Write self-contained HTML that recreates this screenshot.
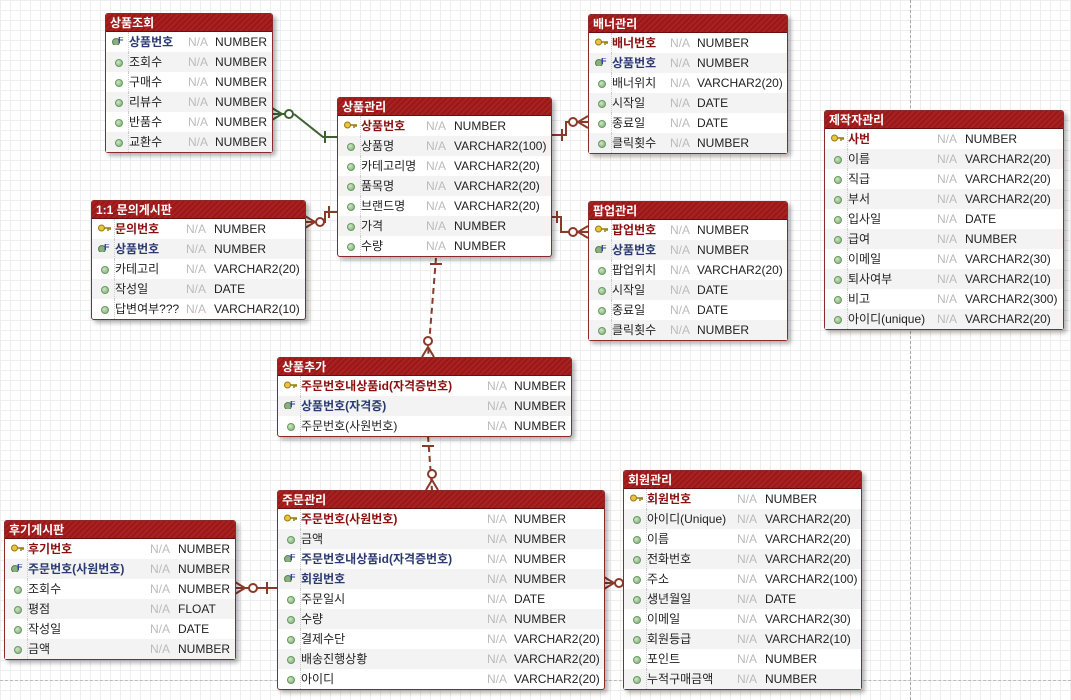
<!DOCTYPE html>
<html><head><meta charset="utf-8"><style>
*{margin:0;padding:0;box-sizing:border-box}
body{width:1071px;height:700px;overflow:hidden;position:relative;background-color:#fff;
background-image:linear-gradient(#eeeeee 1px,transparent 1px),linear-gradient(90deg,#eeeeee 1px,transparent 1px);background-size:10px 10px;
font-family:"Liberation Sans","Noto Sans CJK KR","NanumGothic",sans-serif;font-size:12px;color:#222}
.vd{position:absolute;left:910px;top:0;height:700px;border-left:1px dashed #aaa}
.hd{position:absolute;left:0;top:680px;width:1071px;border-top:1px dashed #bbb}
.t{position:absolute;border:1px solid #8a2a2a;border-radius:3px;background:#fff;box-shadow:3px 3px 4px rgba(0,0,0,.3)}
.h{height:18px;background:repeating-linear-gradient(135deg,#9a1818 0 2px,#a82222 2px 4px);color:#fff;font-weight:bold;font-size:12px;line-height:18px;padding-left:4px;border-bottom:1px solid #6a0f0f;border-radius:2px 2px 0 0}
.r{position:relative;height:20px;line-height:20px;white-space:nowrap}
.r:nth-child(odd){background:#f3f3f3}
.r span{position:absolute;top:0}
.n{left:var(--a)}.na{left:var(--b);color:#bbb}.ty{left:var(--c)}
.i{left:9px;top:7px!important;width:8px;height:8px;border-radius:50%;background:radial-gradient(circle at 35% 35%,#cfe6c8,#7aa870);border:1px solid #6a9a60}
.pk .n{color:#8a1010;font-weight:bold}
.fk .n{color:#2a3a70;font-weight:bold}
.k{left:6px;top:5px!important;width:14px;height:8px}
.pk .i,.fk .i{display:none}
.r::after{content:"";position:absolute;left:22px;top:0;height:20px;border-left:1px dotted #ccc}
</style></head><body>
<div class="vd"></div><div class="hd"></div>
<svg width="1071" height="700" style="position:absolute;left:0;top:0" fill="none" stroke-width="2">
<g stroke="#3d6230">
<path d="M272 114H288M294 114L323 137H337M325 131V143M272 108L282 114L272 120"/><circle cx="289" cy="114" r="4" fill="#fff"/></g>
<g stroke="#8a3a2a">
<path d="M551 135H566V122H588M588 116L578 122L588 128M562 129V141"/><circle cx="573" cy="122" r="4" fill="#fff"/>
<path d="M551 217H561V232H588M588 226L578 232L588 238M557 211V223"/><circle cx="573" cy="232" r="4" fill="#fff"/>
<path d="M337 212H325V222H305M305 216L315 222L305 228M329 206V218"/><circle cx="320" cy="222" r="4" fill="#fff"/>
<path d="M436 258L428 357" stroke-dasharray="6 4"/><path d="M430 264H442M422 357L428 347L434 357"/><circle cx="428" cy="341" r="4" fill="#fff"/>
<path d="M428 436L432 490" stroke-dasharray="6 4"/><path d="M422 446H434M426 490L432 480L438 490"/><circle cx="432" cy="474" r="4" fill="#fff"/>
<path d="M235 588H277M235 582L245 588L235 594M267 582V594"/><circle cx="253" cy="588" r="4" fill="#fff"/>
<path d="M604 583H623M604 577L614 583L604 589"/><circle cx="619" cy="583" r="4" fill="#fff"/>
</g></svg>

<svg width="0" height="0" style="position:absolute"><defs>
<g id="key"><circle cx="3.5" cy="4" r="3" fill="#e8c440" stroke="#9a7a10"/><path d="M6 4H13M10 4V7M12 4V6" stroke="#9a7a10" stroke-width="1.5"/></g>
<g id="fk"><circle cx="4" cy="5" r="3.5" fill="#8ab080" stroke="#5a8050"/><text x="6" y="6" font-size="9" font-weight="bold" fill="#2a3aa0" font-family="Liberation Sans">F</text></g>
</defs></svg>

<!-- 상품조회 -->
<div class="t" style="left:105px;top:13px;width:168px;--a:23px;--b:82px;--c:109px"><div class="h">상품조회</div>
<div class="r fk"><svg class="k" style="position:absolute"><use href="#fk"/></svg><span class="n">상품번호</span><span class="na">N/A</span><span class="ty">NUMBER</span></div>
<div class="r"><span class="i"></span><span class="n">조회수</span><span class="na">N/A</span><span class="ty">NUMBER</span></div>
<div class="r"><span class="i"></span><span class="n">구매수</span><span class="na">N/A</span><span class="ty">NUMBER</span></div>
<div class="r"><span class="i"></span><span class="n">리뷰수</span><span class="na">N/A</span><span class="ty">NUMBER</span></div>
<div class="r"><span class="i"></span><span class="n">반품수</span><span class="na">N/A</span><span class="ty">NUMBER</span></div>
<div class="r"><span class="i"></span><span class="n">교환수</span><span class="na">N/A</span><span class="ty">NUMBER</span></div></div>

<!-- 배너관리 -->
<div class="t" style="left:588px;top:14px;width:200px;--a:23px;--b:81px;--c:108px"><div class="h">배너관리</div>
<div class="r pk"><svg class="k" style="position:absolute"><use href="#key"/></svg><span class="n">배너번호</span><span class="na">N/A</span><span class="ty">NUMBER</span></div>
<div class="r fk"><svg class="k" style="position:absolute"><use href="#fk"/></svg><span class="n">상품번호</span><span class="na">N/A</span><span class="ty">NUMBER</span></div>
<div class="r"><span class="i"></span><span class="n">배너위치</span><span class="na">N/A</span><span class="ty">VARCHAR2(20)</span></div>
<div class="r"><span class="i"></span><span class="n">시작일</span><span class="na">N/A</span><span class="ty">DATE</span></div>
<div class="r"><span class="i"></span><span class="n">종료일</span><span class="na">N/A</span><span class="ty">DATE</span></div>
<div class="r"><span class="i"></span><span class="n">클릭횟수</span><span class="na">N/A</span><span class="ty">NUMBER</span></div></div>

<!-- 상품관리 -->
<div class="t" style="left:337px;top:97px;width:215px;--a:23px;--b:88px;--c:116px"><div class="h">상품관리</div>
<div class="r pk"><svg class="k" style="position:absolute"><use href="#key"/></svg><span class="n">상품번호</span><span class="na">N/A</span><span class="ty">NUMBER</span></div>
<div class="r"><span class="i"></span><span class="n">상품명</span><span class="na">N/A</span><span class="ty">VARCHAR2(100)</span></div>
<div class="r"><span class="i"></span><span class="n">카테고리명</span><span class="na">N/A</span><span class="ty">VARCHAR2(20)</span></div>
<div class="r"><span class="i"></span><span class="n">품목명</span><span class="na">N/A</span><span class="ty">VARCHAR2(20)</span></div>
<div class="r"><span class="i"></span><span class="n">브랜드명</span><span class="na">N/A</span><span class="ty">VARCHAR2(20)</span></div>
<div class="r"><span class="i"></span><span class="n">가격</span><span class="na">N/A</span><span class="ty">NUMBER</span></div>
<div class="r"><span class="i"></span><span class="n">수량</span><span class="na">N/A</span><span class="ty">NUMBER</span></div></div>

<!-- 1:1 -->
<div class="t" style="left:91px;top:200px;width:215px;--a:23px;--b:94px;--c:122px"><div class="h">1:1 문의게시판</div>
<div class="r pk"><svg class="k" style="position:absolute"><use href="#key"/></svg><span class="n">문의번호</span><span class="na">N/A</span><span class="ty">NUMBER</span></div>
<div class="r fk"><svg class="k" style="position:absolute"><use href="#fk"/></svg><span class="n">상품번호</span><span class="na">N/A</span><span class="ty">NUMBER</span></div>
<div class="r"><span class="i"></span><span class="n">카테고리</span><span class="na">N/A</span><span class="ty">VARCHAR2(20)</span></div>
<div class="r"><span class="i"></span><span class="n">작성일</span><span class="na">N/A</span><span class="ty">DATE</span></div>
<div class="r"><span class="i"></span><span class="n">답변여부???</span><span class="na">N/A</span><span class="ty">VARCHAR2(10)</span></div></div>

<!-- 팝업관리 -->
<div class="t" style="left:588px;top:201px;width:200px;--a:23px;--b:81px;--c:108px"><div class="h">팝업관리</div>
<div class="r pk"><svg class="k" style="position:absolute"><use href="#key"/></svg><span class="n">팝업번호</span><span class="na">N/A</span><span class="ty">NUMBER</span></div>
<div class="r fk"><svg class="k" style="position:absolute"><use href="#fk"/></svg><span class="n">상품번호</span><span class="na">N/A</span><span class="ty">NUMBER</span></div>
<div class="r"><span class="i"></span><span class="n">팝업위치</span><span class="na">N/A</span><span class="ty">VARCHAR2(20)</span></div>
<div class="r"><span class="i"></span><span class="n">시작일</span><span class="na">N/A</span><span class="ty">DATE</span></div>
<div class="r"><span class="i"></span><span class="n">종료일</span><span class="na">N/A</span><span class="ty">DATE</span></div>
<div class="r"><span class="i"></span><span class="n">클릭횟수</span><span class="na">N/A</span><span class="ty">NUMBER</span></div></div>

<!-- 제작자관리 -->
<div class="t" style="left:824px;top:110px;width:240px;--a:23px;--b:112px;--c:140px"><div class="h">제작자관리</div>
<div class="r pk"><svg class="k" style="position:absolute"><use href="#key"/></svg><span class="n">사번</span><span class="na">N/A</span><span class="ty">NUMBER</span></div>
<div class="r"><span class="i"></span><span class="n">이름</span><span class="na">N/A</span><span class="ty">VARCHAR2(20)</span></div>
<div class="r"><span class="i"></span><span class="n">직급</span><span class="na">N/A</span><span class="ty">VARCHAR2(20)</span></div>
<div class="r"><span class="i"></span><span class="n">부서</span><span class="na">N/A</span><span class="ty">VARCHAR2(20)</span></div>
<div class="r"><span class="i"></span><span class="n">입사일</span><span class="na">N/A</span><span class="ty">DATE</span></div>
<div class="r"><span class="i"></span><span class="n">급여</span><span class="na">N/A</span><span class="ty">NUMBER</span></div>
<div class="r"><span class="i"></span><span class="n">이메일</span><span class="na">N/A</span><span class="ty">VARCHAR2(30)</span></div>
<div class="r"><span class="i"></span><span class="n">퇴사여부</span><span class="na">N/A</span><span class="ty">VARCHAR2(10)</span></div>
<div class="r"><span class="i"></span><span class="n">비고</span><span class="na">N/A</span><span class="ty">VARCHAR2(300)</span></div>
<div class="r"><span class="i"></span><span class="n">아이디(unique)</span><span class="na">N/A</span><span class="ty">VARCHAR2(20)</span></div></div>

<!-- 상품추가 -->
<div class="t" style="left:277px;top:357px;width:295px;--a:23px;--b:209px;--c:236px"><div class="h">상품추가</div>
<div class="r pk"><svg class="k" style="position:absolute"><use href="#key"/></svg><span class="n">주문번호내상품id(자격증번호)</span><span class="na">N/A</span><span class="ty">NUMBER</span></div>
<div class="r fk"><svg class="k" style="position:absolute"><use href="#fk"/></svg><span class="n">상품번호(자격증)</span><span class="na">N/A</span><span class="ty">NUMBER</span></div>
<div class="r"><span class="i"></span><span class="n">주문번호(사원번호)</span><span class="na">N/A</span><span class="ty">NUMBER</span></div></div>

<!-- 주문관리 -->
<div class="t" style="left:277px;top:490px;width:328px;--a:23px;--b:209px;--c:236px"><div class="h">주문관리</div>
<div class="r pk"><svg class="k" style="position:absolute"><use href="#key"/></svg><span class="n">주문번호(사원번호)</span><span class="na">N/A</span><span class="ty">NUMBER</span></div>
<div class="r"><span class="i"></span><span class="n">금액</span><span class="na">N/A</span><span class="ty">NUMBER</span></div>
<div class="r fk"><svg class="k" style="position:absolute"><use href="#fk"/></svg><span class="n">주문번호내상품id(자격증번호)</span><span class="na">N/A</span><span class="ty">NUMBER</span></div>
<div class="r fk"><svg class="k" style="position:absolute"><use href="#fk"/></svg><span class="n">회원번호</span><span class="na">N/A</span><span class="ty">NUMBER</span></div>
<div class="r"><span class="i"></span><span class="n">주문일시</span><span class="na">N/A</span><span class="ty">DATE</span></div>
<div class="r"><span class="i"></span><span class="n">수량</span><span class="na">N/A</span><span class="ty">NUMBER</span></div>
<div class="r"><span class="i"></span><span class="n">결제수단</span><span class="na">N/A</span><span class="ty">VARCHAR2(20)</span></div>
<div class="r"><span class="i"></span><span class="n">배송진행상황</span><span class="na">N/A</span><span class="ty">VARCHAR2(20)</span></div>
<div class="r"><span class="i"></span><span class="n">아이디</span><span class="na">N/A</span><span class="ty">VARCHAR2(20)</span></div></div>

<!-- 회원관리 -->
<div class="t" style="left:623px;top:470px;width:239px;--a:23px;--b:113px;--c:141px"><div class="h">회원관리</div>
<div class="r pk"><svg class="k" style="position:absolute"><use href="#key"/></svg><span class="n">회원번호</span><span class="na">N/A</span><span class="ty">NUMBER</span></div>
<div class="r"><span class="i"></span><span class="n">아이디(Unique)</span><span class="na">N/A</span><span class="ty">VARCHAR2(20)</span></div>
<div class="r"><span class="i"></span><span class="n">이름</span><span class="na">N/A</span><span class="ty">VARCHAR2(20)</span></div>
<div class="r"><span class="i"></span><span class="n">전화번호</span><span class="na">N/A</span><span class="ty">VARCHAR2(20)</span></div>
<div class="r"><span class="i"></span><span class="n">주소</span><span class="na">N/A</span><span class="ty">VARCHAR2(100)</span></div>
<div class="r"><span class="i"></span><span class="n">생년월일</span><span class="na">N/A</span><span class="ty">DATE</span></div>
<div class="r"><span class="i"></span><span class="n">이메일</span><span class="na">N/A</span><span class="ty">VARCHAR2(30)</span></div>
<div class="r"><span class="i"></span><span class="n">회원등급</span><span class="na">N/A</span><span class="ty">VARCHAR2(10)</span></div>
<div class="r"><span class="i"></span><span class="n">포인트</span><span class="na">N/A</span><span class="ty">NUMBER</span></div>
<div class="r"><span class="i"></span><span class="n">누적구매금액</span><span class="na">N/A</span><span class="ty">NUMBER</span></div></div>

<!-- 후기게시판 -->
<div class="t" style="left:4px;top:520px;width:232px;--a:23px;--b:145px;--c:173px"><div class="h">후기게시판</div>
<div class="r pk"><svg class="k" style="position:absolute"><use href="#key"/></svg><span class="n">후기번호</span><span class="na">N/A</span><span class="ty">NUMBER</span></div>
<div class="r fk"><svg class="k" style="position:absolute"><use href="#fk"/></svg><span class="n">주문번호(사원번호)</span><span class="na">N/A</span><span class="ty">NUMBER</span></div>
<div class="r"><span class="i"></span><span class="n">조회수</span><span class="na">N/A</span><span class="ty">NUMBER</span></div>
<div class="r"><span class="i"></span><span class="n">평점</span><span class="na">N/A</span><span class="ty">FLOAT</span></div>
<div class="r"><span class="i"></span><span class="n">작성일</span><span class="na">N/A</span><span class="ty">DATE</span></div>
<div class="r"><span class="i"></span><span class="n">금액</span><span class="na">N/A</span><span class="ty">NUMBER</span></div></div>
</body></html>
